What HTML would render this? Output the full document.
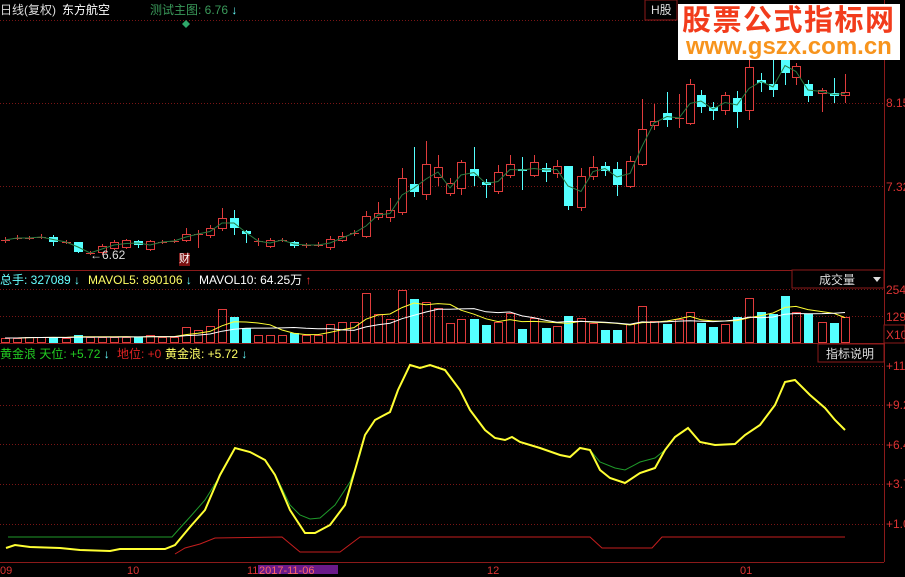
<!DOCTYPE html>
<html><head><meta charset="utf-8"><style>
html,body{margin:0;padding:0;background:#000;}
body{width:905px;height:574px;overflow:hidden;position:relative;font-family:"Liberation Sans","Noto Sans CJK SC",sans-serif;}
.t{position:absolute;font-size:12px;white-space:nowrap;line-height:14px;}
</style></head><body>
<svg id="s" width="905" height="574" style="position:absolute;left:0;top:0" xmlns="http://www.w3.org/2000/svg">
<g stroke="#8b1a1a" stroke-width="1" fill="none">
<line x1="884.5" y1="0" x2="884.5" y2="562"/>
<line x1="0" y1="270.5" x2="884" y2="270.5"/>
<line x1="0" y1="343.5" x2="884" y2="343.5"/>
<line x1="0" y1="562.5" x2="884" y2="562.5"/>
</g>
<g stroke="#7a1515" stroke-width="1" stroke-dasharray="1,2">
<line x1="0" y1="20.5" x2="884" y2="20.5"/>
<line x1="0" y1="103.5" x2="884" y2="103.5"/>
<line x1="0" y1="186.5" x2="884" y2="186.5"/>
<line x1="0" y1="289.5" x2="884" y2="289.5"/>
<line x1="0" y1="316.5" x2="884" y2="316.5"/>
<line x1="0" y1="366.5" x2="884" y2="366.5"/>
<line x1="0" y1="405.5" x2="884" y2="405.5"/>
<line x1="0" y1="444.5" x2="884" y2="444.5"/>
<line x1="0" y1="484.5" x2="884" y2="484.5"/>
<line x1="0" y1="524.5" x2="884" y2="524.5"/>
</g>
<g id="c"></g>
<polyline fill="none" stroke="#1f9a2a" stroke-width="1" points="8,537 172,537 180,528 190,517 205,500 220,476 235,448 250,452 265,460 275,474 290,505 300,515 310,519 320,518 335,505 350,482 360,455 365,435 375,420 390,412 398,390 410,365 420,368 430,365 445,370 460,390 470,410 485,430 495,438 505,440 512,437 520,442 540,448 560,455 570,457 580,448 590,450 600,462 615,468 625,470 640,462 655,458 665,450 675,437 688,428 700,442 715,445 735,444 745,435 760,425 775,405 785,382 795,380 810,395 825,408 835,420 845,430"/>
<polyline fill="none" stroke="#c41e1e" stroke-width="1" points="175,554 185,548 200,544 215,538 282,537 300,552 340,552 360,537 590,537 602,548 652,548 662,537 845,537"/>
<polyline fill="none" stroke="#ffff33" stroke-width="2" points="6,548 15,545 30,547 60,548 80,550 110,551 120,549 140,549 165,549 175,545 190,527 205,510 220,475 235,448 250,452 265,460 275,475 290,510 305,533 315,533 330,525 345,505 355,470 365,435 375,420 390,412 398,390 410,365 420,368 430,365 445,370 460,390 470,410 485,430 495,438 505,440 512,437 520,442 540,448 560,455 570,457 580,448 590,450 600,470 610,478 625,483 640,473 655,468 665,450 675,437 688,428 700,442 715,445 735,444 745,435 760,425 775,405 785,382 795,380 810,395 825,408 835,420 845,430"/>
<polygon points="186,20 190,24 186,28 182,24" fill="#2fa86a"/>
<rect x="258" y="565" width="80" height="9" fill="#6a1a8a"/>
<rect x="678" y="4" width="222" height="56" fill="#fff"/>
<rect x="645" y="0" width="32" height="20" fill="#000" stroke="#8b1a1a"/>
<rect x="792" y="270" width="92" height="18" fill="#000" stroke="#8b1a1a"/>
<rect x="818" y="344" width="66" height="18" fill="#000" stroke="#8b1a1a"/>
<rect x="884" y="325" width="21" height="18" fill="#000" stroke="#8b1a1a"/>
<polygon points="873,277 881,277 877,282" fill="#ddd"/>
</svg>
<div class="t" style="left:0;top:3px;color:#ddd">日线(复权)</div>
<div class="t" style="left:62px;top:3px;color:#fff">东方航空</div>
<div class="t" style="left:150px;top:3px;color:#3a9a5a">测试主图: 6.76 <span style="color:#6ff">↓</span></div>
<div class="t" style="left:651px;top:3px;color:#ddd">H股</div>
<div class="t" style="left:682px;top:4px;color:#f23c1c;font-size:29px;line-height:34px;font-weight:bold;letter-spacing:1.5px">股票公式指标网</div>
<div class="t" style="left:686px;top:35px;color:#f7941d;font-size:24px;line-height:24px;font-weight:bold">www.gszx.com.cn</div>
<div class="t" style="left:90px;top:248px;color:#ddd">←6.62</div>
<div class="t" style="left:179px;top:253px;color:#fff;background:#7a1010;font-size:11px;line-height:13px">财</div>
<div class="t" style="left:0;top:273px;color:#6ff">总手: 327089 ↓</div>
<div class="t" style="left:88px;top:273px;color:#ff6">MAVOL5: 890106 <span style="color:#6ff">↓</span></div>
<div class="t" style="left:199px;top:273px;color:#fff">MAVOL10: 64.25万 <span style="color:#e33">↑</span></div>
<div class="t" style="left:819px;top:273px;color:#ddd">成交量</div>
<div class="t" style="left:0;top:347px;color:#2c2">黄金浪 天位: +5.72 <span style="color:#6ff">↓</span></div>
<div class="t" style="left:117px;top:347px;color:#d22">地位: +0</div>
<div class="t" style="left:165px;top:347px;color:#ff6">黄金浪: +5.72 <span style="color:#6ff">↓</span></div>
<div class="t" style="left:826px;top:347px;color:#ddd">指标说明</div>
<div class="t" style="left:886px;top:96px;color:#d33">8.15</div>
<div class="t" style="left:886px;top:180px;color:#d33">7.32</div>
<div class="t" style="left:886px;top:283px;color:#d33">254</div>
<div class="t" style="left:886px;top:310px;color:#d33">129</div>
<div class="t" style="left:886px;top:328px;color:#d33">X10</div>
<div class="t" style="left:886px;top:359px;color:#d33">+11</div>
<div class="t" style="left:886px;top:398px;color:#d33">+9.2</div>
<div class="t" style="left:886px;top:438px;color:#d33">+6.4</div>
<div class="t" style="left:886px;top:477px;color:#d33">+3.7</div>
<div class="t" style="left:886px;top:517px;color:#d33">+1.0</div>
<div class="t" style="left:0;top:566px;color:#d33;font-size:11px;line-height:10px">09</div>
<div class="t" style="left:127px;top:566px;color:#d33;font-size:11px;line-height:10px">10</div>
<div class="t" style="left:247px;top:566px;color:#d33;font-size:11px;line-height:10px">11</div>
<div class="t" style="left:259px;top:566px;color:#f66;font-size:11px;line-height:10px">2017-11-06</div>
<div class="t" style="left:487px;top:566px;color:#d33;font-size:11px;line-height:10px">12</div>
<div class="t" style="left:740px;top:566px;color:#d33;font-size:11px;line-height:10px">01</div>
<script>
var C=[
[5,240,240,237,243,'x'],[17,238,238,235,240,'x'],[29,238,238,236,240,'x'],[41,237,237,234,239,'x'],
[53,237,242,235,246,'c'],[66,242,242,240,244,'x'],[78,242,252,242,253,'c'],[90,253,253,251,255,'x'],
[102,246,252,244,255,'r'],[114,242,248,240,250,'r'],[126,240,247,239,249,'r'],[138,241,245,240,248,'c'],
[150,241,249,240,251,'r'],[162,242,242,240,244,'x'],[174,241,241,239,243,'x'],[186,234,240,228,242,'r'],
[198,234,234,230,248,'x'],[210,228,235,225,238,'r'],[222,218,228,208,231,'r'],[234,218,228,210,235,'c'],
[246,231,234,230,243,'c'],[258,241,241,238,246,'x'],[270,240,246,238,248,'r'],[282,240,240,238,242,'x'],
[294,242,246,241,248,'c'],[306,245,245,243,248,'x'],[318,245,245,242,247,'x'],[330,239,247,236,250,'r'],
[342,236,240,232,242,'r'],[354,233,233,230,236,'x'],[366,216,236,211,238,'r'],[378,213,217,202,220,'r'],
[390,210,217,198,222,'r'],[402,178,212,168,215,'r'],[414,184,192,147,197,'c'],[426,164,194,141,200,'r'],
[438,167,177,155,186,'r'],[450,183,193,178,196,'r'],[461,162,188,160,195,'r'],[474,169,176,147,186,'c'],
[486,182,185,179,198,'c'],[498,172,191,165,194,'r'],[510,164,175,155,178,'r'],[522,169,171,157,190,'c'],
[534,162,175,155,177,'r'],[546,168,172,163,182,'c'],[557,166,173,160,178,'r'],[568,166,206,166,210,'c'],
[581,176,207,168,211,'r'],[593,167,176,156,180,'r'],[605,166,171,162,176,'c'],[617,169,185,162,196,'c'],
[630,161,186,156,188,'r'],[642,129,164,99,166,'r'],[654,121,125,104,130,'r'],[667,113,120,92,127,'c'],
[679,118,118,94,128,'x'],[690,84,123,79,125,'r'],[701,95,107,90,113,'c'],[713,107,111,102,120,'c'],
[725,95,110,92,115,'r'],[737,98,112,91,128,'c'],[749,67,110,60,120,'r'],[761,80,83,73,92,'c'],
[773,84,90,60,97,'c'],[785,58,73,60,85,'c'],[796,66,77,63,85,'r'],[808,84,96,80,102,'c'],
[822,90,93,88,112,'r'],[834,93,96,78,103,'c'],[845,92,95,74,103,'r']];
var V=[338,338,337,337,337,338,335,337,337,337,337,337,335,337,337,327,330,326,309,317,328,335,335,335,333,335,335,324,322,322,293,314,319,290,299,302,308,323,319,319,325,322,313,329,318,328,326,316,318,323,330,330,324,306,321,324,319,312,323,327,324,317,298,312,314,296,312,314,322,323,317];
var s='',m=[];
C.forEach(function(k,i){var x=k[0],col=k[5]=='c'?'#54ffff':'#e03c3c';
 s+='<line x1="'+(x+.5)+'" y1="'+k[3]+'" x2="'+(x+.5)+'" y2="'+k[4]+'" stroke="'+col+'"/>';
 if(k[5]=='x')s+='<line x1="'+(x-4)+'" y1="'+(k[1]+.5)+'" x2="'+(x+5)+'" y2="'+(k[1]+.5)+'" stroke="'+col+'"/>';
 else if(k[5]=='c')s+='<rect x="'+(x-4)+'" y="'+k[1]+'" width="9" height="'+Math.max(1,k[2]-k[1])+'" fill="'+col+'"/>';
 else s+='<rect x="'+(x-3.5)+'" y="'+(k[1]+.5)+'" width="8" height="'+Math.max(1,k[2]-k[1])+'" fill="#000" stroke="'+col+'"/>';
 m.push(x+','+((k[1]+k[2])/2));
 var v=V[i]||337;
 if(k[5]=='c')s+='<rect x="'+(x-4)+'" y="'+v+'" width="9" height="'+(343-v)+'" fill="#54ffff"/>';
 else s+='<rect x="'+(x-3.5)+'" y="'+(v+.5)+'" width="8" height="'+(342-v)+'" fill="none" stroke="#e03c3c"/>';
});
var a=[],b=[];
for(var i=0;i<C.length;i++){var s5=0,n=0;for(var j=Math.max(0,i-4);j<=i;j++){s5+=V[j]||337;n++;}a.push(C[i][0]+','+(s5/n));
 var s10=0,n2=0;for(var j=Math.max(0,i-9);j<=i;j++){s10+=V[j]||337;n2++;}b.push(C[i][0]+','+(s10/n2));}
s+='<polyline fill="none" stroke="#2a7a40" points="'+m.join(' ')+'"/>';
s+='<polyline fill="none" stroke="#ffff33" points="'+a.join(' ')+'"/>';
s+='<polyline fill="none" stroke="#fff" points="'+b.join(' ')+'"/>';
document.getElementById('c').innerHTML=s;
</script>
</body></html>
